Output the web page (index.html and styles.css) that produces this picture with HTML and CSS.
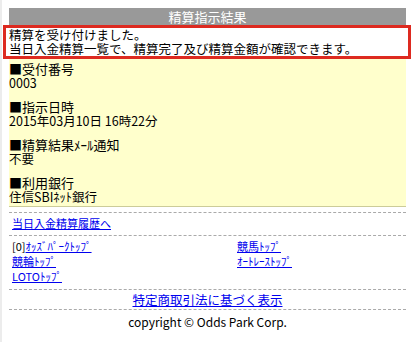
FILE: index.html
```html
<!DOCTYPE html>
<html lang="ja">
<head>
<meta charset="utf-8">
<link rel="stylesheet" href="styles.css">
</head>
<body>
<div class="page">
  <div class="title">精算指示結果</div>
  <div class="notice">精算を受け付けました。<br>当日入金精算一覧で、精算完了及び精算金額が確認できます。</div>
  <div class="info">
    <div class="item"><div class="label">■受付番号</div><div class="value">0003</div></div>
    <div class="item"><div class="label">■指示日時</div><div class="value">2015年03月10日 16時22分</div></div>
    <div class="item"><div class="label">■精算結果ﾒｰﾙ通知</div><div class="value">不要</div></div>
    <div class="item"><div class="label">■利用銀行</div><div class="value">住信SBIﾈｯﾄ銀行</div></div>
  </div>
  <div class="sep first"></div>
  <div class="history"><a href="#">当日入金精算履歴へ</a></div>
  <div class="sep"></div>
  <div class="nav">
    <div class="cell">[0]<a href="#">ｵｯｽﾞﾊﾟｰｸﾄｯﾌﾟ</a></div>
    <div class="cell"><a href="#">競馬ﾄｯﾌﾟ</a></div>
    <div class="cell"><a href="#">競輪ﾄｯﾌﾟ</a></div>
    <div class="cell"><a href="#">ｵｰﾄﾚｰｽﾄｯﾌﾟ</a></div>
    <div class="cell"><a href="#">LOTOﾄｯﾌﾟ</a></div>
  </div>
  <div class="sep"></div>
  <div class="law"><a href="#">特定商取引法に基づく表示</a></div>
  <div class="sep"></div>
  <div class="copy">copyright © Odds Park Corp.</div>
</div>
</body>
</html>
```
FILE: styles.css
```css
html, body {
  margin: 0;
  padding: 0;
  background: #fff;
}
body {
  border-left: 2px solid #ececec;
  height: 342px;
  box-sizing: border-box;
  overflow: hidden;
  font-family: "Noto Sans CJK JP", "DejaVu Sans", sans-serif;
  font-size: 13px;
  color: #000;
}
.page {
  margin: 8px 0 0 7px;
  width: 397px;
}
a {
  color: #0000ee;
  text-decoration: underline;
}
.title {
  background: #999999;
  color: #fff;
  text-align: center;
  height: 17px;
  line-height: 17px;
  font-size: 13px;
}
.notice {
  margin: 0 -5px 0 -6px;
  border: 3px solid #dd2a20;
  padding: 0 0 0 3px;
  line-height: 14px;
  font-size: 12.5px;
  background: #fff;
}
.info {
  background: #ffffcc;
  border-bottom: 1px solid #cccc99;
  padding: 2px 0 3px 0;
  display: flex;
  flex-direction: column;
  gap: 10px;
}
.label {
  font-size: 13px;
  line-height: 15px;
}
.value {
  font-size: 12.5px;
  line-height: 13px;
}
.sep {
  border-top: 1px dashed #aaaaaa;
}
.sep.first {
  margin-top: 5px;
}
.history {
  padding: 3px 0 4px 3px;
  font-size: 11px;
  line-height: 15px;
}
.nav {
  display: grid;
  grid-template-columns: 225px 1fr;
  padding: 3px 0 5px 3px;
  font-size: 11px;
  line-height: 15px;
}
.law {
  text-align: center;
  font-size: 12.5px;
  line-height: 18px;
  padding-top: 1px;
}
.copy {
  text-align: center;
  font-size: 12px;
  line-height: 16px;
  padding-top: 4px;
}
```
